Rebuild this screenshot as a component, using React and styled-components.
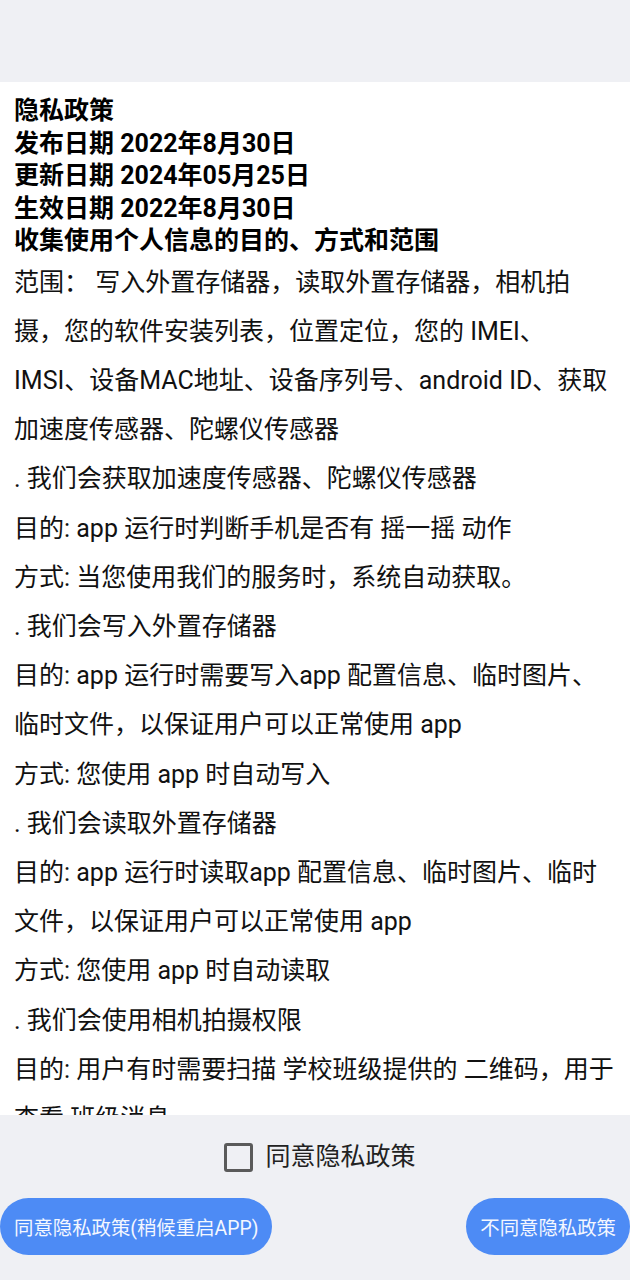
import styled, { createGlobalStyle } from "styled-components";

const GlobalStyle = createGlobalStyle`
  html, body {
    margin: 0;
    padding: 0;
    background: #eff0f4;
  }
  body {
    font-family: Roboto, "Noto Sans CJK SC", sans-serif;
  }
`;

const headings = [
  "隐私政策",
  "发布日期 2022年8月30日",
  "更新日期 2024年05月25日",
  "生效日期 2022年8月30日",
  "收集使用个人信息的目的、方式和范围",
];

const lines = [
  "范围： 写入外置存储器，读取外置存储器，相机拍",
  "摄，您的软件安装列表，位置定位，您的 IMEI、",
  "IMSI、设备MAC地址、设备序列号、android ID、获取",
  "加速度传感器、陀螺仪传感器",
  ". 我们会获取加速度传感器、陀螺仪传感器",
  "目的: app 运行时判断手机是否有 摇一摇 动作",
  "方式: 当您使用我们的服务时，系统自动获取。",
  ". 我们会写入外置存储器",
  "目的: app 运行时需要写入app 配置信息、临时图片、",
  "临时文件，以保证用户可以正常使用 app",
  "方式: 您使用 app 时自动写入",
  ". 我们会读取外置存储器",
  "目的: app 运行时读取app 配置信息、临时图片、临时",
  "文件，以保证用户可以正常使用 app",
  "方式: 您使用 app 时自动读取",
  ". 我们会使用相机拍摄权限",
  "目的: 用户有时需要扫描 学校班级提供的 二维码，用于",
  "查看 班级消息",
];

export default function App() {
  return (
    <>
      <GlobalStyle />
      <Screen>
        <TopBar />
        <Content>
          {headings.map((h) => (
            <Heading key={h}>{h}</Heading>
          ))}
          {lines.map((l, i) => (
            <Line key={i}>{l}</Line>
          ))}
        </Content>
        <Footer>
          <AgreeRow>
            <Checkbox />
            <AgreeLabel>同意隐私政策</AgreeLabel>
          </AgreeRow>
          <ButtonRow>
            <PillButton>同意隐私政策(稍候重启APP)</PillButton>
            <PillButton>不同意隐私政策</PillButton>
          </ButtonRow>
        </Footer>
      </Screen>
    </>
  );
}

const Screen = styled.div`
  width: 630px;
  height: 1280px;
  display: flex;
  flex-direction: column;
  background: #eff0f4;
  overflow: hidden;
`;

const TopBar = styled.div`
  height: 82px;
  flex-shrink: 0;
  background: #eff0f4;
`;

const Content = styled.div`
  height: 1033px;
  flex-shrink: 0;
  overflow: hidden;
  background: #fff;
  padding: 13px 14px 0;
  box-sizing: border-box;
  color: #000;
`;

const Heading = styled.div`
  font-size: 25px;
  font-weight: 700;
  line-height: 32.5px;
  white-space: nowrap;
`;

const Line = styled.div`
  font-size: 25px;
  font-weight: 400;
  line-height: 49.2px;
  white-space: pre;
  color: #111;
`;

const Footer = styled.div`
  flex: 1;
  display: flex;
  flex-direction: column;
  background: #eff0f4;
`;

const AgreeRow = styled.div`
  display: flex;
  align-items: center;
  justify-content: center;
  gap: 12px;
  padding-top: 27px;
  height: 30px;
  padding-left: 10px;
`;

const Checkbox = styled.span`
  width: 23px;
  height: 23px;
  border: 3px solid #5a5a5a;
  border-radius: 3px;
  box-sizing: content-box;
`;

const AgreeLabel = styled.span`
  font-size: 25px;
  line-height: 30px;
  color: #222;
`;

const ButtonRow = styled.div`
  display: flex;
  justify-content: space-between;
  margin-top: 26px;
`;

const PillButton = styled.button`
  height: 57px;
  padding: 0 14px;
  border: none;
  border-radius: 29px;
  background: #4d8bf5;
  color: #f4f7ff;
  font-family: Roboto, "Noto Sans CJK SC", sans-serif;
  font-size: 19.4px;
  white-space: nowrap;
`;
